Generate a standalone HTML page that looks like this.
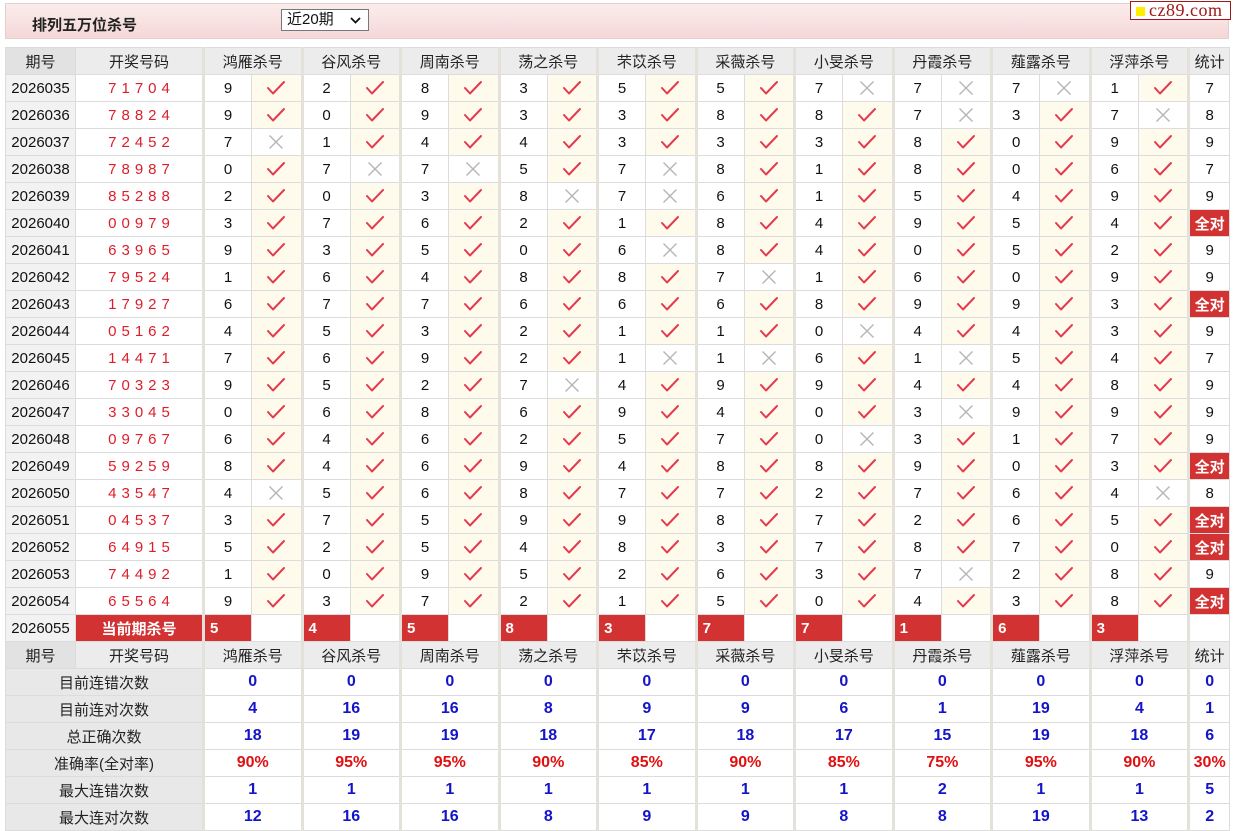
<!DOCTYPE html>
<html><head><meta charset="utf-8"><style>
body{margin:0;background:#fff;width:1234px;height:831px;overflow:hidden;font-family:"Liberation Sans","Noto Sans CJK SC",sans-serif;position:relative}
.bar{position:absolute;left:5px;top:3px;width:1222px;height:34px;border:1px solid #e2cfcf;background:linear-gradient(#fbecec,#f5d8d8);}
.bar b{position:absolute;left:26px;top:10px;font-size:15px;color:#222}
.sel{position:absolute;left:281px;top:9px;border:1px solid #777;background:#fff;font-size:15px;line-height:20px;color:#111;box-sizing:border-box;padding-left:5px;width:88px;height:22px}
.sel svg{position:absolute;right:7px;top:7px}
.logo{position:absolute;left:1130px;top:1px;width:101px;height:19px;border:1px solid #a01818;background:#fff;box-sizing:border-box}
.logo i{position:absolute;left:5px;top:5px;width:9px;height:9px;background:#ffee00}
.logo span{position:absolute;left:18px;top:-2px;font-family:"Liberation Serif",serif;font-size:18px;color:#a01818;letter-spacing:.5px}
table{position:absolute;left:5px;top:47px;border-collapse:collapse;table-layout:fixed;width:1224px}
td{border:1px solid #dcdcdc;height:26px;padding:0;text-align:center;font-size:15px;color:#111;white-space:nowrap;overflow:hidden}
tr.h td{background:#ececec;color:#222}
td.p{background:#f2f2f2}
tr.h td.p{background:#e2e2e2}
td.n{color:#dd1e2a;letter-spacing:5px;padding-left:5px}
td.g{border-left:3px solid #e4e1da}
td.k{background:#fffbec}
td svg{display:block;margin:auto}
td.r{background:#d33232;color:#fff;font-weight:bold;font-size:15px}
td.rl{background:#d33232;color:#fff;font-weight:bold;font-size:15px;text-align:left;padding-left:5px}
td.l{background:#e8e8e8;color:#222}
td.b{color:#1414c8;font-weight:bold;font-size:16px}
td.pc{color:#e01010;font-weight:bold;font-size:16px}
</style></head><body>
<svg width="0" height="0" style="position:absolute"><defs>
<symbol id="c" viewBox="0 0 20 16"><path d="M2 8 L7 13.5 L18 2" fill="none" stroke="#e43a4f" stroke-width="2" stroke-linecap="round" stroke-linejoin="round"/></symbol>
<symbol id="x" viewBox="0 0 16 16"><path d="M1.5 1.5 L14.5 14.5 M14.5 1.5 L1.5 14.5" fill="none" stroke="#b5b5b5" stroke-width="1.4"/></symbol>
</defs></svg>
<div class="bar"><b>排列五万位杀号</b></div>
<div class="sel">近20期<svg width="11" height="7" viewBox="0 0 11 7"><path d="M1 1 L5.5 5.5 L10 1" fill="none" stroke="#111" stroke-width="1.8"/></svg></div>
<div class="logo"><i></i><span>cz89.com</span></div>
<table>
<colgroup><col style="width:70px"><col style="width:128px">
<col style="width:48px"><col style="width:50.5px"><col style="width:48px"><col style="width:50.5px"><col style="width:48px"><col style="width:50.5px"><col style="width:48px"><col style="width:50.5px"><col style="width:48px"><col style="width:50.5px"><col style="width:48px"><col style="width:50.5px"><col style="width:48px"><col style="width:50.5px"><col style="width:48px"><col style="width:50.5px"><col style="width:48px"><col style="width:50.5px"><col style="width:48px"><col style="width:50.5px"><col style="width:41px"></colgroup>
<tr class="h"><td class="p">期号</td><td>开奖号码</td><td class="g" colspan="2">鸿雁杀号</td><td class="g" colspan="2">谷风杀号</td><td class="g" colspan="2">周南杀号</td><td class="g" colspan="2">荡之杀号</td><td class="g" colspan="2">芣苡杀号</td><td class="g" colspan="2">采薇杀号</td><td class="g" colspan="2">小旻杀号</td><td class="g" colspan="2">丹霞杀号</td><td class="g" colspan="2">薤露杀号</td><td class="g" colspan="2">浮萍杀号</td><td class="g">统计</td></tr>
<tr><td class="p">2026035</td><td class="n">71704</td><td class="g">9</td><td class="k"><svg width="20" height="16"><use href="#c"/></svg></td><td class="g">2</td><td class="k"><svg width="20" height="16"><use href="#c"/></svg></td><td class="g">8</td><td class="k"><svg width="20" height="16"><use href="#c"/></svg></td><td class="g">3</td><td class="k"><svg width="20" height="16"><use href="#c"/></svg></td><td class="g">5</td><td class="k"><svg width="20" height="16"><use href="#c"/></svg></td><td class="g">5</td><td class="k"><svg width="20" height="16"><use href="#c"/></svg></td><td class="g">7</td><td><svg width="16" height="16"><use href="#x"/></svg></td><td class="g">7</td><td><svg width="16" height="16"><use href="#x"/></svg></td><td class="g">7</td><td><svg width="16" height="16"><use href="#x"/></svg></td><td class="g">1</td><td class="k"><svg width="20" height="16"><use href="#c"/></svg></td><td class="g">7</td></tr>
<tr><td class="p">2026036</td><td class="n">78824</td><td class="g">9</td><td class="k"><svg width="20" height="16"><use href="#c"/></svg></td><td class="g">0</td><td class="k"><svg width="20" height="16"><use href="#c"/></svg></td><td class="g">9</td><td class="k"><svg width="20" height="16"><use href="#c"/></svg></td><td class="g">3</td><td class="k"><svg width="20" height="16"><use href="#c"/></svg></td><td class="g">3</td><td class="k"><svg width="20" height="16"><use href="#c"/></svg></td><td class="g">8</td><td class="k"><svg width="20" height="16"><use href="#c"/></svg></td><td class="g">8</td><td class="k"><svg width="20" height="16"><use href="#c"/></svg></td><td class="g">7</td><td><svg width="16" height="16"><use href="#x"/></svg></td><td class="g">3</td><td class="k"><svg width="20" height="16"><use href="#c"/></svg></td><td class="g">7</td><td><svg width="16" height="16"><use href="#x"/></svg></td><td class="g">8</td></tr>
<tr><td class="p">2026037</td><td class="n">72452</td><td class="g">7</td><td><svg width="16" height="16"><use href="#x"/></svg></td><td class="g">1</td><td class="k"><svg width="20" height="16"><use href="#c"/></svg></td><td class="g">4</td><td class="k"><svg width="20" height="16"><use href="#c"/></svg></td><td class="g">4</td><td class="k"><svg width="20" height="16"><use href="#c"/></svg></td><td class="g">3</td><td class="k"><svg width="20" height="16"><use href="#c"/></svg></td><td class="g">3</td><td class="k"><svg width="20" height="16"><use href="#c"/></svg></td><td class="g">3</td><td class="k"><svg width="20" height="16"><use href="#c"/></svg></td><td class="g">8</td><td class="k"><svg width="20" height="16"><use href="#c"/></svg></td><td class="g">0</td><td class="k"><svg width="20" height="16"><use href="#c"/></svg></td><td class="g">9</td><td class="k"><svg width="20" height="16"><use href="#c"/></svg></td><td class="g">9</td></tr>
<tr><td class="p">2026038</td><td class="n">78987</td><td class="g">0</td><td class="k"><svg width="20" height="16"><use href="#c"/></svg></td><td class="g">7</td><td><svg width="16" height="16"><use href="#x"/></svg></td><td class="g">7</td><td><svg width="16" height="16"><use href="#x"/></svg></td><td class="g">5</td><td class="k"><svg width="20" height="16"><use href="#c"/></svg></td><td class="g">7</td><td><svg width="16" height="16"><use href="#x"/></svg></td><td class="g">8</td><td class="k"><svg width="20" height="16"><use href="#c"/></svg></td><td class="g">1</td><td class="k"><svg width="20" height="16"><use href="#c"/></svg></td><td class="g">8</td><td class="k"><svg width="20" height="16"><use href="#c"/></svg></td><td class="g">0</td><td class="k"><svg width="20" height="16"><use href="#c"/></svg></td><td class="g">6</td><td class="k"><svg width="20" height="16"><use href="#c"/></svg></td><td class="g">7</td></tr>
<tr><td class="p">2026039</td><td class="n">85288</td><td class="g">2</td><td class="k"><svg width="20" height="16"><use href="#c"/></svg></td><td class="g">0</td><td class="k"><svg width="20" height="16"><use href="#c"/></svg></td><td class="g">3</td><td class="k"><svg width="20" height="16"><use href="#c"/></svg></td><td class="g">8</td><td><svg width="16" height="16"><use href="#x"/></svg></td><td class="g">7</td><td><svg width="16" height="16"><use href="#x"/></svg></td><td class="g">6</td><td class="k"><svg width="20" height="16"><use href="#c"/></svg></td><td class="g">1</td><td class="k"><svg width="20" height="16"><use href="#c"/></svg></td><td class="g">5</td><td class="k"><svg width="20" height="16"><use href="#c"/></svg></td><td class="g">4</td><td class="k"><svg width="20" height="16"><use href="#c"/></svg></td><td class="g">9</td><td class="k"><svg width="20" height="16"><use href="#c"/></svg></td><td class="g">9</td></tr>
<tr><td class="p">2026040</td><td class="n">00979</td><td class="g">3</td><td class="k"><svg width="20" height="16"><use href="#c"/></svg></td><td class="g">7</td><td class="k"><svg width="20" height="16"><use href="#c"/></svg></td><td class="g">6</td><td class="k"><svg width="20" height="16"><use href="#c"/></svg></td><td class="g">2</td><td class="k"><svg width="20" height="16"><use href="#c"/></svg></td><td class="g">1</td><td class="k"><svg width="20" height="16"><use href="#c"/></svg></td><td class="g">8</td><td class="k"><svg width="20" height="16"><use href="#c"/></svg></td><td class="g">4</td><td class="k"><svg width="20" height="16"><use href="#c"/></svg></td><td class="g">9</td><td class="k"><svg width="20" height="16"><use href="#c"/></svg></td><td class="g">5</td><td class="k"><svg width="20" height="16"><use href="#c"/></svg></td><td class="g">4</td><td class="k"><svg width="20" height="16"><use href="#c"/></svg></td><td class="g r">全对</td></tr>
<tr><td class="p">2026041</td><td class="n">63965</td><td class="g">9</td><td class="k"><svg width="20" height="16"><use href="#c"/></svg></td><td class="g">3</td><td class="k"><svg width="20" height="16"><use href="#c"/></svg></td><td class="g">5</td><td class="k"><svg width="20" height="16"><use href="#c"/></svg></td><td class="g">0</td><td class="k"><svg width="20" height="16"><use href="#c"/></svg></td><td class="g">6</td><td><svg width="16" height="16"><use href="#x"/></svg></td><td class="g">8</td><td class="k"><svg width="20" height="16"><use href="#c"/></svg></td><td class="g">4</td><td class="k"><svg width="20" height="16"><use href="#c"/></svg></td><td class="g">0</td><td class="k"><svg width="20" height="16"><use href="#c"/></svg></td><td class="g">5</td><td class="k"><svg width="20" height="16"><use href="#c"/></svg></td><td class="g">2</td><td class="k"><svg width="20" height="16"><use href="#c"/></svg></td><td class="g">9</td></tr>
<tr><td class="p">2026042</td><td class="n">79524</td><td class="g">1</td><td class="k"><svg width="20" height="16"><use href="#c"/></svg></td><td class="g">6</td><td class="k"><svg width="20" height="16"><use href="#c"/></svg></td><td class="g">4</td><td class="k"><svg width="20" height="16"><use href="#c"/></svg></td><td class="g">8</td><td class="k"><svg width="20" height="16"><use href="#c"/></svg></td><td class="g">8</td><td class="k"><svg width="20" height="16"><use href="#c"/></svg></td><td class="g">7</td><td><svg width="16" height="16"><use href="#x"/></svg></td><td class="g">1</td><td class="k"><svg width="20" height="16"><use href="#c"/></svg></td><td class="g">6</td><td class="k"><svg width="20" height="16"><use href="#c"/></svg></td><td class="g">0</td><td class="k"><svg width="20" height="16"><use href="#c"/></svg></td><td class="g">9</td><td class="k"><svg width="20" height="16"><use href="#c"/></svg></td><td class="g">9</td></tr>
<tr><td class="p">2026043</td><td class="n">17927</td><td class="g">6</td><td class="k"><svg width="20" height="16"><use href="#c"/></svg></td><td class="g">7</td><td class="k"><svg width="20" height="16"><use href="#c"/></svg></td><td class="g">7</td><td class="k"><svg width="20" height="16"><use href="#c"/></svg></td><td class="g">6</td><td class="k"><svg width="20" height="16"><use href="#c"/></svg></td><td class="g">6</td><td class="k"><svg width="20" height="16"><use href="#c"/></svg></td><td class="g">6</td><td class="k"><svg width="20" height="16"><use href="#c"/></svg></td><td class="g">8</td><td class="k"><svg width="20" height="16"><use href="#c"/></svg></td><td class="g">9</td><td class="k"><svg width="20" height="16"><use href="#c"/></svg></td><td class="g">9</td><td class="k"><svg width="20" height="16"><use href="#c"/></svg></td><td class="g">3</td><td class="k"><svg width="20" height="16"><use href="#c"/></svg></td><td class="g r">全对</td></tr>
<tr><td class="p">2026044</td><td class="n">05162</td><td class="g">4</td><td class="k"><svg width="20" height="16"><use href="#c"/></svg></td><td class="g">5</td><td class="k"><svg width="20" height="16"><use href="#c"/></svg></td><td class="g">3</td><td class="k"><svg width="20" height="16"><use href="#c"/></svg></td><td class="g">2</td><td class="k"><svg width="20" height="16"><use href="#c"/></svg></td><td class="g">1</td><td class="k"><svg width="20" height="16"><use href="#c"/></svg></td><td class="g">1</td><td class="k"><svg width="20" height="16"><use href="#c"/></svg></td><td class="g">0</td><td><svg width="16" height="16"><use href="#x"/></svg></td><td class="g">4</td><td class="k"><svg width="20" height="16"><use href="#c"/></svg></td><td class="g">4</td><td class="k"><svg width="20" height="16"><use href="#c"/></svg></td><td class="g">3</td><td class="k"><svg width="20" height="16"><use href="#c"/></svg></td><td class="g">9</td></tr>
<tr><td class="p">2026045</td><td class="n">14471</td><td class="g">7</td><td class="k"><svg width="20" height="16"><use href="#c"/></svg></td><td class="g">6</td><td class="k"><svg width="20" height="16"><use href="#c"/></svg></td><td class="g">9</td><td class="k"><svg width="20" height="16"><use href="#c"/></svg></td><td class="g">2</td><td class="k"><svg width="20" height="16"><use href="#c"/></svg></td><td class="g">1</td><td><svg width="16" height="16"><use href="#x"/></svg></td><td class="g">1</td><td><svg width="16" height="16"><use href="#x"/></svg></td><td class="g">6</td><td class="k"><svg width="20" height="16"><use href="#c"/></svg></td><td class="g">1</td><td><svg width="16" height="16"><use href="#x"/></svg></td><td class="g">5</td><td class="k"><svg width="20" height="16"><use href="#c"/></svg></td><td class="g">4</td><td class="k"><svg width="20" height="16"><use href="#c"/></svg></td><td class="g">7</td></tr>
<tr><td class="p">2026046</td><td class="n">70323</td><td class="g">9</td><td class="k"><svg width="20" height="16"><use href="#c"/></svg></td><td class="g">5</td><td class="k"><svg width="20" height="16"><use href="#c"/></svg></td><td class="g">2</td><td class="k"><svg width="20" height="16"><use href="#c"/></svg></td><td class="g">7</td><td><svg width="16" height="16"><use href="#x"/></svg></td><td class="g">4</td><td class="k"><svg width="20" height="16"><use href="#c"/></svg></td><td class="g">9</td><td class="k"><svg width="20" height="16"><use href="#c"/></svg></td><td class="g">9</td><td class="k"><svg width="20" height="16"><use href="#c"/></svg></td><td class="g">4</td><td class="k"><svg width="20" height="16"><use href="#c"/></svg></td><td class="g">4</td><td class="k"><svg width="20" height="16"><use href="#c"/></svg></td><td class="g">8</td><td class="k"><svg width="20" height="16"><use href="#c"/></svg></td><td class="g">9</td></tr>
<tr><td class="p">2026047</td><td class="n">33045</td><td class="g">0</td><td class="k"><svg width="20" height="16"><use href="#c"/></svg></td><td class="g">6</td><td class="k"><svg width="20" height="16"><use href="#c"/></svg></td><td class="g">8</td><td class="k"><svg width="20" height="16"><use href="#c"/></svg></td><td class="g">6</td><td class="k"><svg width="20" height="16"><use href="#c"/></svg></td><td class="g">9</td><td class="k"><svg width="20" height="16"><use href="#c"/></svg></td><td class="g">4</td><td class="k"><svg width="20" height="16"><use href="#c"/></svg></td><td class="g">0</td><td class="k"><svg width="20" height="16"><use href="#c"/></svg></td><td class="g">3</td><td><svg width="16" height="16"><use href="#x"/></svg></td><td class="g">9</td><td class="k"><svg width="20" height="16"><use href="#c"/></svg></td><td class="g">9</td><td class="k"><svg width="20" height="16"><use href="#c"/></svg></td><td class="g">9</td></tr>
<tr><td class="p">2026048</td><td class="n">09767</td><td class="g">6</td><td class="k"><svg width="20" height="16"><use href="#c"/></svg></td><td class="g">4</td><td class="k"><svg width="20" height="16"><use href="#c"/></svg></td><td class="g">6</td><td class="k"><svg width="20" height="16"><use href="#c"/></svg></td><td class="g">2</td><td class="k"><svg width="20" height="16"><use href="#c"/></svg></td><td class="g">5</td><td class="k"><svg width="20" height="16"><use href="#c"/></svg></td><td class="g">7</td><td class="k"><svg width="20" height="16"><use href="#c"/></svg></td><td class="g">0</td><td><svg width="16" height="16"><use href="#x"/></svg></td><td class="g">3</td><td class="k"><svg width="20" height="16"><use href="#c"/></svg></td><td class="g">1</td><td class="k"><svg width="20" height="16"><use href="#c"/></svg></td><td class="g">7</td><td class="k"><svg width="20" height="16"><use href="#c"/></svg></td><td class="g">9</td></tr>
<tr><td class="p">2026049</td><td class="n">59259</td><td class="g">8</td><td class="k"><svg width="20" height="16"><use href="#c"/></svg></td><td class="g">4</td><td class="k"><svg width="20" height="16"><use href="#c"/></svg></td><td class="g">6</td><td class="k"><svg width="20" height="16"><use href="#c"/></svg></td><td class="g">9</td><td class="k"><svg width="20" height="16"><use href="#c"/></svg></td><td class="g">4</td><td class="k"><svg width="20" height="16"><use href="#c"/></svg></td><td class="g">8</td><td class="k"><svg width="20" height="16"><use href="#c"/></svg></td><td class="g">8</td><td class="k"><svg width="20" height="16"><use href="#c"/></svg></td><td class="g">9</td><td class="k"><svg width="20" height="16"><use href="#c"/></svg></td><td class="g">0</td><td class="k"><svg width="20" height="16"><use href="#c"/></svg></td><td class="g">3</td><td class="k"><svg width="20" height="16"><use href="#c"/></svg></td><td class="g r">全对</td></tr>
<tr><td class="p">2026050</td><td class="n">43547</td><td class="g">4</td><td><svg width="16" height="16"><use href="#x"/></svg></td><td class="g">5</td><td class="k"><svg width="20" height="16"><use href="#c"/></svg></td><td class="g">6</td><td class="k"><svg width="20" height="16"><use href="#c"/></svg></td><td class="g">8</td><td class="k"><svg width="20" height="16"><use href="#c"/></svg></td><td class="g">7</td><td class="k"><svg width="20" height="16"><use href="#c"/></svg></td><td class="g">7</td><td class="k"><svg width="20" height="16"><use href="#c"/></svg></td><td class="g">2</td><td class="k"><svg width="20" height="16"><use href="#c"/></svg></td><td class="g">7</td><td class="k"><svg width="20" height="16"><use href="#c"/></svg></td><td class="g">6</td><td class="k"><svg width="20" height="16"><use href="#c"/></svg></td><td class="g">4</td><td><svg width="16" height="16"><use href="#x"/></svg></td><td class="g">8</td></tr>
<tr><td class="p">2026051</td><td class="n">04537</td><td class="g">3</td><td class="k"><svg width="20" height="16"><use href="#c"/></svg></td><td class="g">7</td><td class="k"><svg width="20" height="16"><use href="#c"/></svg></td><td class="g">5</td><td class="k"><svg width="20" height="16"><use href="#c"/></svg></td><td class="g">9</td><td class="k"><svg width="20" height="16"><use href="#c"/></svg></td><td class="g">9</td><td class="k"><svg width="20" height="16"><use href="#c"/></svg></td><td class="g">8</td><td class="k"><svg width="20" height="16"><use href="#c"/></svg></td><td class="g">7</td><td class="k"><svg width="20" height="16"><use href="#c"/></svg></td><td class="g">2</td><td class="k"><svg width="20" height="16"><use href="#c"/></svg></td><td class="g">6</td><td class="k"><svg width="20" height="16"><use href="#c"/></svg></td><td class="g">5</td><td class="k"><svg width="20" height="16"><use href="#c"/></svg></td><td class="g r">全对</td></tr>
<tr><td class="p">2026052</td><td class="n">64915</td><td class="g">5</td><td class="k"><svg width="20" height="16"><use href="#c"/></svg></td><td class="g">2</td><td class="k"><svg width="20" height="16"><use href="#c"/></svg></td><td class="g">5</td><td class="k"><svg width="20" height="16"><use href="#c"/></svg></td><td class="g">4</td><td class="k"><svg width="20" height="16"><use href="#c"/></svg></td><td class="g">8</td><td class="k"><svg width="20" height="16"><use href="#c"/></svg></td><td class="g">3</td><td class="k"><svg width="20" height="16"><use href="#c"/></svg></td><td class="g">7</td><td class="k"><svg width="20" height="16"><use href="#c"/></svg></td><td class="g">8</td><td class="k"><svg width="20" height="16"><use href="#c"/></svg></td><td class="g">7</td><td class="k"><svg width="20" height="16"><use href="#c"/></svg></td><td class="g">0</td><td class="k"><svg width="20" height="16"><use href="#c"/></svg></td><td class="g r">全对</td></tr>
<tr><td class="p">2026053</td><td class="n">74492</td><td class="g">1</td><td class="k"><svg width="20" height="16"><use href="#c"/></svg></td><td class="g">0</td><td class="k"><svg width="20" height="16"><use href="#c"/></svg></td><td class="g">9</td><td class="k"><svg width="20" height="16"><use href="#c"/></svg></td><td class="g">5</td><td class="k"><svg width="20" height="16"><use href="#c"/></svg></td><td class="g">2</td><td class="k"><svg width="20" height="16"><use href="#c"/></svg></td><td class="g">6</td><td class="k"><svg width="20" height="16"><use href="#c"/></svg></td><td class="g">3</td><td class="k"><svg width="20" height="16"><use href="#c"/></svg></td><td class="g">7</td><td><svg width="16" height="16"><use href="#x"/></svg></td><td class="g">2</td><td class="k"><svg width="20" height="16"><use href="#c"/></svg></td><td class="g">8</td><td class="k"><svg width="20" height="16"><use href="#c"/></svg></td><td class="g">9</td></tr>
<tr><td class="p">2026054</td><td class="n">65564</td><td class="g">9</td><td class="k"><svg width="20" height="16"><use href="#c"/></svg></td><td class="g">3</td><td class="k"><svg width="20" height="16"><use href="#c"/></svg></td><td class="g">7</td><td class="k"><svg width="20" height="16"><use href="#c"/></svg></td><td class="g">2</td><td class="k"><svg width="20" height="16"><use href="#c"/></svg></td><td class="g">1</td><td class="k"><svg width="20" height="16"><use href="#c"/></svg></td><td class="g">5</td><td class="k"><svg width="20" height="16"><use href="#c"/></svg></td><td class="g">0</td><td class="k"><svg width="20" height="16"><use href="#c"/></svg></td><td class="g">4</td><td class="k"><svg width="20" height="16"><use href="#c"/></svg></td><td class="g">3</td><td class="k"><svg width="20" height="16"><use href="#c"/></svg></td><td class="g">8</td><td class="k"><svg width="20" height="16"><use href="#c"/></svg></td><td class="g r">全对</td></tr>
<tr><td class="p">2026055</td><td class="r">当前期杀号</td><td class="g rl">5</td><td></td><td class="g rl">4</td><td></td><td class="g rl">5</td><td></td><td class="g rl">8</td><td></td><td class="g rl">3</td><td></td><td class="g rl">7</td><td></td><td class="g rl">7</td><td></td><td class="g rl">1</td><td></td><td class="g rl">6</td><td></td><td class="g rl">3</td><td></td><td class="g"></td></tr>
<tr class="h"><td class="p">期号</td><td>开奖号码</td><td class="g" colspan="2">鸿雁杀号</td><td class="g" colspan="2">谷风杀号</td><td class="g" colspan="2">周南杀号</td><td class="g" colspan="2">荡之杀号</td><td class="g" colspan="2">芣苡杀号</td><td class="g" colspan="2">采薇杀号</td><td class="g" colspan="2">小旻杀号</td><td class="g" colspan="2">丹霞杀号</td><td class="g" colspan="2">薤露杀号</td><td class="g" colspan="2">浮萍杀号</td><td class="g">统计</td></tr>
<tr><td class="l" colspan="2">目前连错次数</td><td class="g b" colspan="2">0</td><td class="g b" colspan="2">0</td><td class="g b" colspan="2">0</td><td class="g b" colspan="2">0</td><td class="g b" colspan="2">0</td><td class="g b" colspan="2">0</td><td class="g b" colspan="2">0</td><td class="g b" colspan="2">0</td><td class="g b" colspan="2">0</td><td class="g b" colspan="2">0</td><td class="g b">0</td></tr>
<tr><td class="l" colspan="2">目前连对次数</td><td class="g b" colspan="2">4</td><td class="g b" colspan="2">16</td><td class="g b" colspan="2">16</td><td class="g b" colspan="2">8</td><td class="g b" colspan="2">9</td><td class="g b" colspan="2">9</td><td class="g b" colspan="2">6</td><td class="g b" colspan="2">1</td><td class="g b" colspan="2">19</td><td class="g b" colspan="2">4</td><td class="g b">1</td></tr>
<tr><td class="l" colspan="2">总正确次数</td><td class="g b" colspan="2">18</td><td class="g b" colspan="2">19</td><td class="g b" colspan="2">19</td><td class="g b" colspan="2">18</td><td class="g b" colspan="2">17</td><td class="g b" colspan="2">18</td><td class="g b" colspan="2">17</td><td class="g b" colspan="2">15</td><td class="g b" colspan="2">19</td><td class="g b" colspan="2">18</td><td class="g b">6</td></tr>
<tr><td class="l" colspan="2">准确率(全对率)</td><td class="g pc" colspan="2">90%</td><td class="g pc" colspan="2">95%</td><td class="g pc" colspan="2">95%</td><td class="g pc" colspan="2">90%</td><td class="g pc" colspan="2">85%</td><td class="g pc" colspan="2">90%</td><td class="g pc" colspan="2">85%</td><td class="g pc" colspan="2">75%</td><td class="g pc" colspan="2">95%</td><td class="g pc" colspan="2">90%</td><td class="g pc">30%</td></tr>
<tr><td class="l" colspan="2">最大连错次数</td><td class="g b" colspan="2">1</td><td class="g b" colspan="2">1</td><td class="g b" colspan="2">1</td><td class="g b" colspan="2">1</td><td class="g b" colspan="2">1</td><td class="g b" colspan="2">1</td><td class="g b" colspan="2">1</td><td class="g b" colspan="2">2</td><td class="g b" colspan="2">1</td><td class="g b" colspan="2">1</td><td class="g b">5</td></tr>
<tr><td class="l" colspan="2">最大连对次数</td><td class="g b" colspan="2">12</td><td class="g b" colspan="2">16</td><td class="g b" colspan="2">16</td><td class="g b" colspan="2">8</td><td class="g b" colspan="2">9</td><td class="g b" colspan="2">9</td><td class="g b" colspan="2">8</td><td class="g b" colspan="2">8</td><td class="g b" colspan="2">19</td><td class="g b" colspan="2">13</td><td class="g b">2</td></tr>
</table>
</body></html>
